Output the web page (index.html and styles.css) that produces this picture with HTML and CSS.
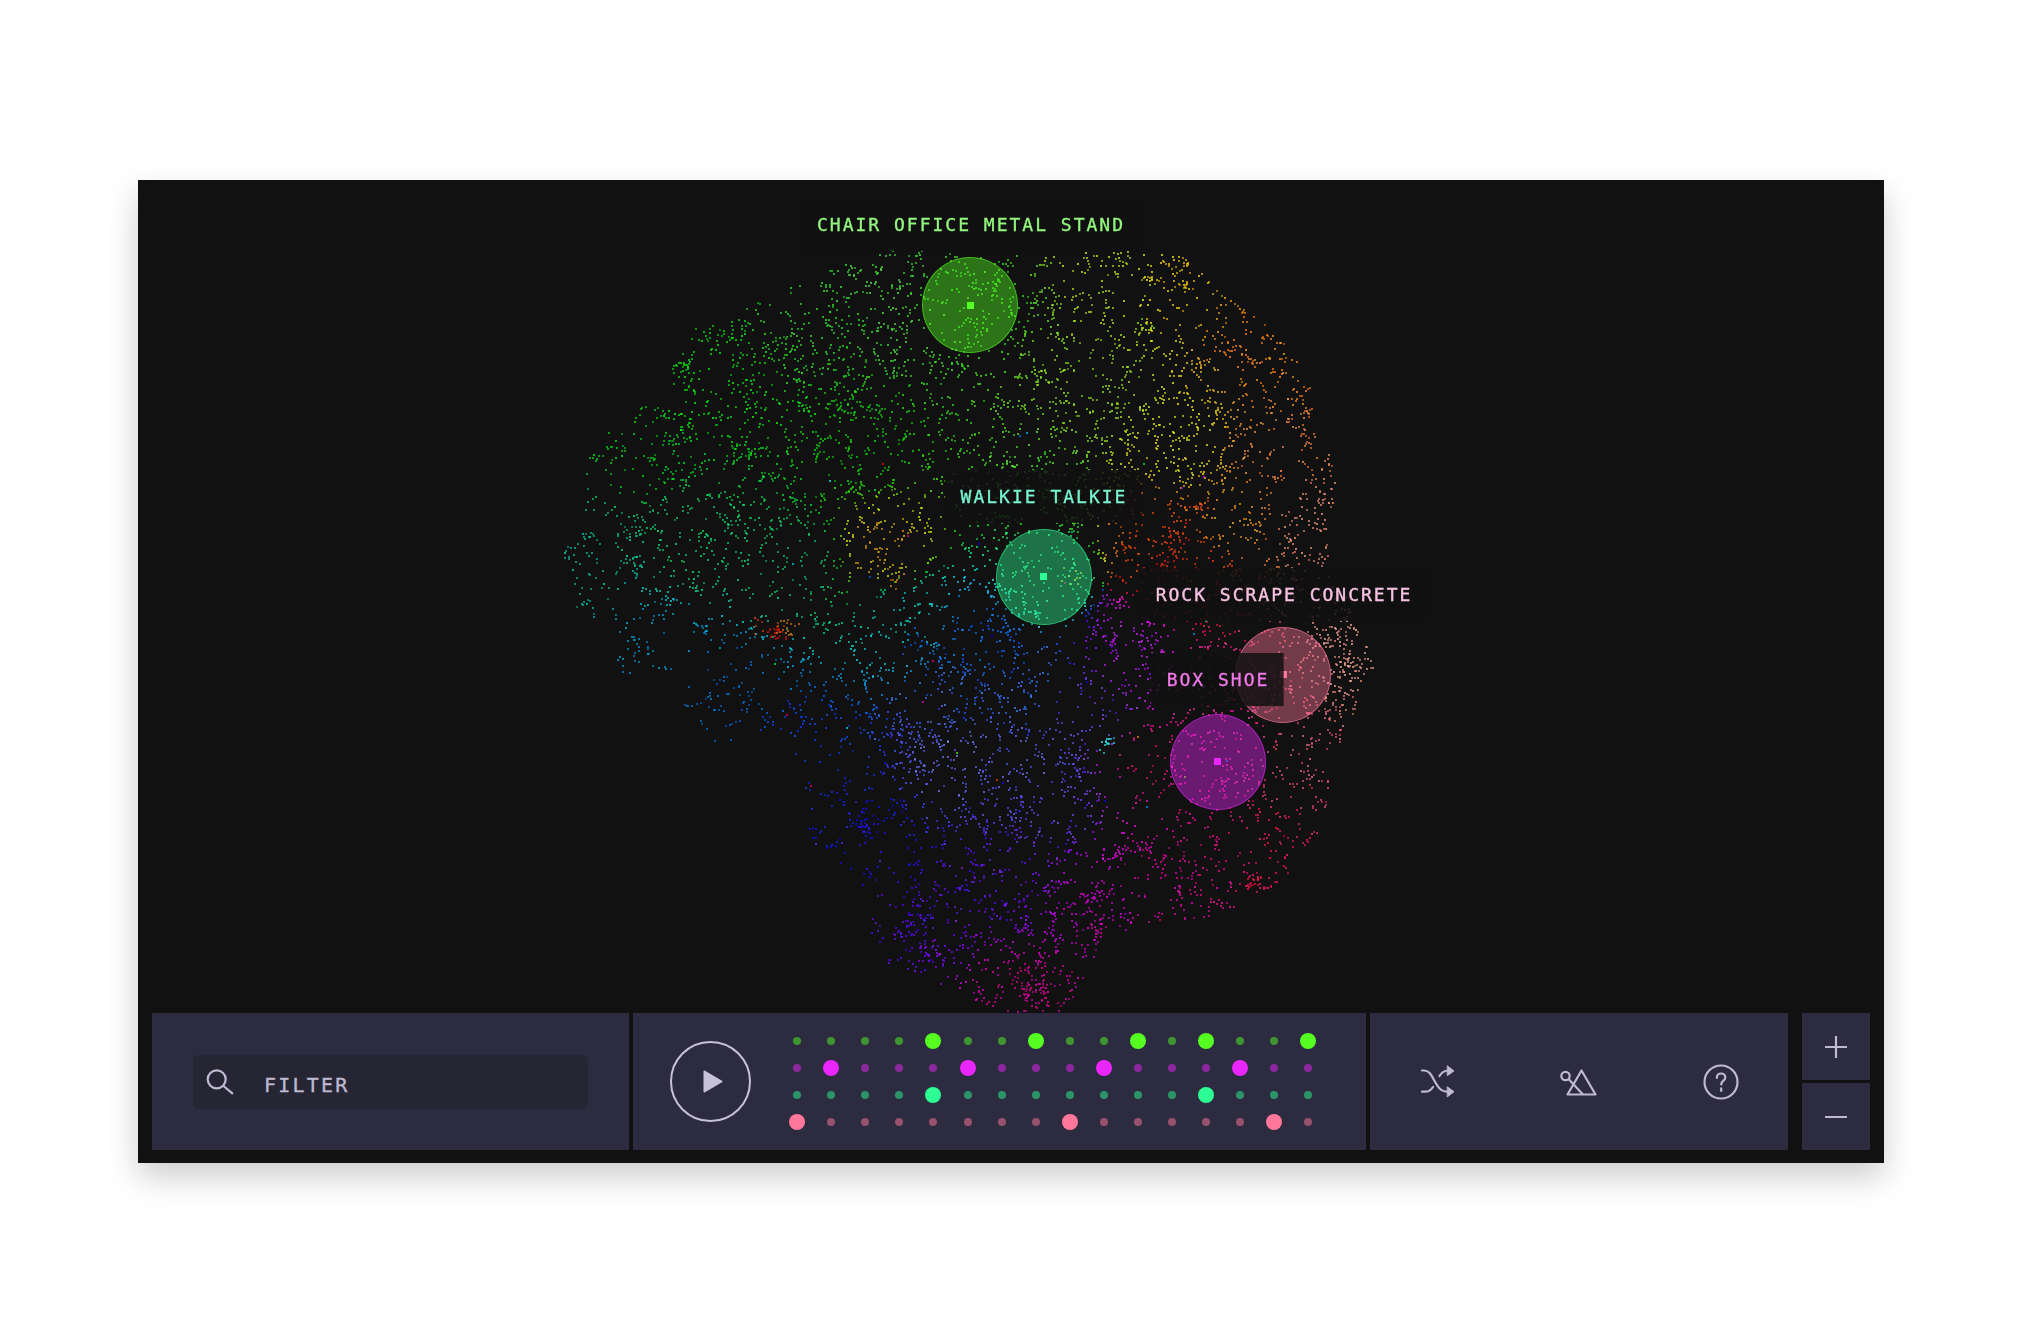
FILE: index.html
```html
<!DOCTYPE html>
<html lang="en">
<head>
<meta charset="utf-8">
<title>Sound map</title>
<link rel="stylesheet" href="styles.css">
</head>
<body>
<main class="window">
  <section class="stage">
    <canvas class="scatter" id="scatter" width="1746" height="833"></canvas>

    <div class="pin pin-chair"><i class="pin-core"></i></div>
    <div class="pin pin-walkie"><i class="pin-core"></i></div>
    <div class="pin pin-rock"><i class="pin-core"></i></div>
    <div class="pin pin-box"><i class="pin-core"></i></div>

    <div class="tag tag-chair">CHAIR OFFICE METAL STAND</div>
    <div class="tag tag-walkie">WALKIE TALKIE</div>
    <div class="tag tag-rock">ROCK SCRAPE CONCRETE</div>
    <div class="tag tag-box">BOX SHOE</div>
  </section>

  <footer class="bar">
    <div class="panel panel-filter">
      <div class="filter">
        <svg class="filter-icon" viewBox="0 0 28 28" width="28" height="28"><circle cx="10.7" cy="11.3" r="9"/><path d="M17.5 18l8.8 7.4"/></svg>
        <span class="filter-text">FILTER</span>
      </div>
    </div>

    <div class="panel panel-seq">
      <button class="play" type="button" aria-label="Play">
        <svg viewBox="0 0 20 23" width="20" height="23"><path d="M1.5 1.5L18.5 11.5L1.5 21.5Z"/></svg>
      </button>
      <div class="grid">
        <i class="dot g"></i><i class="dot g"></i><i class="dot g"></i><i class="dot g"></i><i class="dot g on"></i><i class="dot g"></i><i class="dot g"></i><i class="dot g on"></i><i class="dot g"></i><i class="dot g"></i><i class="dot g on"></i><i class="dot g"></i><i class="dot g on"></i><i class="dot g"></i><i class="dot g"></i><i class="dot g on"></i>
        <i class="dot m"></i><i class="dot m on"></i><i class="dot m"></i><i class="dot m"></i><i class="dot m"></i><i class="dot m on"></i><i class="dot m"></i><i class="dot m"></i><i class="dot m"></i><i class="dot m on"></i><i class="dot m"></i><i class="dot m"></i><i class="dot m"></i><i class="dot m on"></i><i class="dot m"></i><i class="dot m"></i>
        <i class="dot t"></i><i class="dot t"></i><i class="dot t"></i><i class="dot t"></i><i class="dot t on"></i><i class="dot t"></i><i class="dot t"></i><i class="dot t"></i><i class="dot t"></i><i class="dot t"></i><i class="dot t"></i><i class="dot t"></i><i class="dot t on"></i><i class="dot t"></i><i class="dot t"></i><i class="dot t"></i>
        <i class="dot p on"></i><i class="dot p"></i><i class="dot p"></i><i class="dot p"></i><i class="dot p"></i><i class="dot p"></i><i class="dot p"></i><i class="dot p"></i><i class="dot p on"></i><i class="dot p"></i><i class="dot p"></i><i class="dot p"></i><i class="dot p"></i><i class="dot p"></i><i class="dot p on"></i><i class="dot p"></i>
      </div>
    </div>

    <div class="panel panel-tools">
      <svg class="tool" viewBox="0 0 36 34" width="36" height="34" aria-label="Shuffle">
        <path d="M2 5.5h2c5 0 7 4 10 9.500s6 11.700 14 11.700"/>
        <path d="M2 26.700h3c3.500 0 6-1.500 8-4.700"/>
        <path d="M19.500 11c2-3.500 5-5.500 9-5.500"/>
        <path class="solid" d="M27.500 1l6.500 5-6.500 4.500z"/>
        <path class="solid" d="M27.500 22l6.500 4.700-6.500 5z"/>
      </svg>
      <svg class="tool" viewBox="0 0 40 34" width="40" height="34" aria-label="Shapes">
        <circle cx="5.500" cy="11" r="4.200"/>
        <path d="M9 14.500L22.500 29"/>
        <path d="M21.500 5.500L35.500 29.500H7.500Z"/>
      </svg>
      <svg class="tool" viewBox="0 0 36 36" width="36" height="36" aria-label="Help">
        <circle cx="18" cy="18" r="16.500"/>
        <path d="M13.800 14c0-2.800 1.900-4.500 4.300-4.500s4.200 1.600 4.200 3.900c0 3.200-4.100 3.400-4.100 7.100"/>
        <path d="M18.200 24.400v2.600"/>
      </svg>
    </div>

    <div class="zoom">
      <button class="zoom-btn" type="button" aria-label="Zoom in"><svg viewBox="0 0 22 22" width="22" height="22"><path d="M11 0.500v21M0.500 11h21"/></svg></button>
      <button class="zoom-btn" type="button" aria-label="Zoom out"><svg viewBox="0 0 22 22" width="22" height="22"><path d="M0.500 11h21"/></svg></button>
    </div>
  </footer>
</main>
<script src="scatter.js"></script>
</body>
</html>
```
FILE: styles.css
```css
* { box-sizing: border-box; }

html, body { margin: 0; background: #fff; }

body { padding: 180px 136px 181px 138px; }

.window {
  width: 1746px;
  height: 983px;
  display: flex;
  flex-direction: column;
  background: #111112;
  box-shadow: 0 14px 30px rgba(0, 0, 0, .2);
}

.stage {
  position: relative;
  flex: 1;
  overflow: hidden;
}

.scatter { display: block; }

.pin {
  position: absolute;
  width: 96px;
  height: 96px;
  margin: -48px 0 0 -48px;
  border-radius: 50%;
  border: 1.5px solid;
  display: flex;
  align-items: center;
  justify-content: center;
}

.pin-core { width: 7px; height: 7px; }

.pin-chair  { left: 832px;  top: 125px; background: rgba(85, 255, 34, .41);  border-color: rgba(85, 255, 34, .55); }
.pin-walkie { left: 905.5px; top: 396.5px; background: rgba(45, 253, 148, .41); border-color: rgba(45, 253, 148, .55); }
.pin-rock   { left: 1145px; top: 494.5px; background: rgba(255, 120, 156, .41); border-color: rgba(255, 120, 156, .6); }
.pin-box    { left: 1079.5px; top: 581.5px; background: rgba(233, 38, 251, .41); border-color: rgba(233, 38, 251, .55); }

.pin-chair .pin-core  { background: #55ff22; }
.pin-walkie .pin-core { background: #2dfd94; }
.pin-rock .pin-core   { background: #ff789c; }
.pin-box .pin-core    { background: #e926fb; }

.tag {
  position: absolute;
  transform: translateX(-50%);
  padding: 16px 14px 16px 16px;
  font: 18px/21px "DejaVu Sans Mono", "Liberation Mono", monospace;
  letter-spacing: 2px;
  white-space: nowrap;
  background: rgba(17, 17, 18, .84);
  -webkit-text-stroke: .35px currentColor;
}

.tag-chair  { left: 832px;  top: 18px;  color: #93f77f; }
.tag-walkie { left: 905px;  top: 290px; color: #78f2cf; }
.tag-rock   { left: 1145px; top: 388px; color: #f7c2e2; }
.tag-box    { left: 1079px; top: 473px; color: #f078e8; }

.bar {
  flex: none;
  height: 137px;
  margin: 0 14px 13px;
  display: flex;
}

.panel {
  background: #2d2b3f;
  display: flex;
  align-items: center;
}

.panel-filter { width: 477px; padding-left: 41px; }

.filter {
  width: 395px;
  height: 54px;
  padding-left: 13px;
  display: flex;
  align-items: center;
  gap: 30px;
  background: #262534;
  border-radius: 6px;
}

.filter-icon, .tool, .zoom-btn svg {
  fill: none;
  stroke: #bdbad1;
  stroke-width: 2.2;
  stroke-linecap: round;
  stroke-linejoin: round;
}

.filter-text {
  padding-top: 6px;
  font: 20px/24px "DejaVu Sans Mono", "Liberation Mono", monospace;
  letter-spacing: 2.2px;
  color: #bdbad1;
  -webkit-text-stroke: .35px currentColor;
}

.panel-seq { width: 733px; margin-left: 4px; padding-left: 37px; }

.play {
  flex: none;
  width: 81px;
  height: 81px;
  padding: 0 0 0 4px;
  display: flex;
  align-items: center;
  justify-content: center;
  background: none;
  border: 2.5px solid #c5c2d9;
  border-radius: 50%;
}

.play path { fill: #c5c2d9; stroke: #c5c2d9; stroke-width: 2; stroke-linejoin: round; }

.grid {
  margin-left: 29px;
  display: grid;
  grid-template-columns: repeat(16, 34.1px);
  grid-auto-rows: 27.33px;
  align-items: center;
  justify-items: center;
}

.dot {
  display: block;
  width: 8px;
  height: 8px;
  border-radius: 50%;
  opacity: .5;
}

.dot.on { width: 16px; height: 16px; opacity: 1; }
.dot.g { background: #55ff22; }
.dot.m { background: #e926fb; }
.dot.t { background: #2dfd94; }
.dot.p { background: #ff789c; }

.panel-tools {
  width: 418px;
  margin-left: 4px;
  padding: 0 49px 0 50px;
  justify-content: space-between;
}

.tool .solid { fill: #bdbad1; stroke-width: 1; }

.zoom {
  width: 68px;
  margin-left: 14px;
  display: flex;
  flex-direction: column;
  gap: 3px;
}

.zoom-btn {
  flex: 1;
  padding: 0;
  display: flex;
  align-items: center;
  justify-content: center;
  background: #2d2b3f;
  border: 0;
}
```
FILE: scatter.js
```js
(function () {
  var canvas = document.getElementById('scatter');
  var ctx = canvas.getContext('2d');
  var OX = 138, OY = 180;

  var seed = 20417;
  function rnd() {
    seed |= 0; seed = seed + 0x6D2B79F5 | 0;
    var t = Math.imul(seed ^ seed >>> 15, 1 | seed);
    t = t + Math.imul(t ^ t >>> 7, 61 | t) ^ t;
    return ((t ^ t >>> 14) >>> 0) / 4294967296;
  }
  function gauss() { return (rnd() + rnd() + rnd() + rnd() - 2) * 1.2; }

  var poly = [[563,550],[577,502],[590,450],[620,423],[647,400],[670,370],[683,333],[717,317],[747,307],[780,287],[813,278],[857,258],[903,247],[1000,255],[1133,250],[1183,257],[1203,273],[1240,303],[1277,330],[1290,350],[1310,360],[1313,413],[1310,423],[1337,463],[1337,517],[1337,563],[1360,620],[1375,663],[1370,683],[1357,703],[1360,713],[1333,753],[1327,813],[1312,843],[1283,883],[1250,900],[1207,920],[1163,920],[1100,943],[1083,990],[1057,1013],[1007,1013],[960,993],[923,978],[887,963],[867,927],[877,893],[840,873],[837,853],[817,847],[803,827],[807,807],[803,763],[770,740],[717,743],[683,710],[690,670],[620,677],[600,620],[577,610]];

  function inside(x, y) {
    var c = false;
    for (var i = 0, j = poly.length - 1; i < poly.length; j = i++) {
      var a = poly[i], b = poly[j];
      if ((a[1] > y) !== (b[1] > y) && x < (b[0] - a[0]) * (y - a[1]) / (b[1] - a[1]) + a[0]) c = !c;
    }
    return c;
  }

  // x, y, hue, saturation, lightness, density
  var anchors = [
    [640,450,125,95,42,.85],[720,400,122,95,45,.9],[820,330,118,75,52,.9],[900,300,115,70,55,.8],
    [600,560,168,90,38,.7],[680,540,150,85,45,.75],[650,640,195,95,42,.55],[720,690,208,95,42,.5],
    [800,760,225,95,48,.45],[870,830,240,90,50,.65],[905,930,262,95,50,.8],[1020,1000,315,95,42,1],
    [1100,900,298,95,42,.75],[1160,880,315,95,45,.8],[1210,860,325,90,48,.8],[1280,850,342,90,52,.7],
    [1300,770,345,75,62,.8],[1350,650,8,65,72,1],[1310,520,14,72,68,.95],[1270,460,25,85,58,.9],
    [1265,345,30,95,52,.9],[1180,270,47,95,50,.95],[1120,262,70,85,48,.75],[975,300,112,80,52,.8],
    [1090,390,85,80,50,1],[1180,450,62,90,52,1],[1230,510,38,90,52,.8],[1160,530,18,95,48,.9],
    [1180,575,8,90,45,.7],[1040,480,108,80,52,.8],[860,450,118,95,42,.8],[800,560,150,85,42,.6],
    [880,545,50,90,45,.6],[905,620,178,90,42,.85],[980,640,215,95,50,1],[1030,690,220,90,58,1],
    [950,760,238,85,68,1],[1050,800,250,90,62,.9],[1000,880,262,95,52,.9],[1130,650,285,90,52,.9],
    [1220,700,325,90,55,.7],[1090,720,255,85,60,.7],[1140,760,330,90,50,.5],
    [960,700,222,85,58,1],[1030,760,235,80,65,1],[1045,575,148,80,55,.85]
  ];

  function sample(x, y) {
    var sw = 0, cx = 0, cy = 0, s = 0, l = 0, d = 0;
    for (var i = 0; i < anchors.length; i++) {
      var a = anchors[i], dx = x - a[0], dy = y - a[1], q = dx * dx + dy * dy + 300;
      var w = 1 / (q * q), r = a[2] * Math.PI / 180;
      sw += w; cx += w * Math.cos(r); cy += w * Math.sin(r); s += w * a[3]; l += w * a[4]; d += w * a[5];
    }
    var h = Math.atan2(cy, cx) * 180 / Math.PI;
    return { h: h, s: s / sw, l: l / sw, d: d / sw };
  }

  function plot(x, y, h, s, l, alpha) {
    ctx.fillStyle = 'hsla(' + h.toFixed(0) + ',' + s.toFixed(0) + '%,' + l.toFixed(0) + '%,' + alpha + ')';
    ctx.beginPath();
    ctx.arc(Math.round(x) - OX, Math.round(y) - OY, 1.05, 0, Math.PI * 2);
    ctx.fill();
  }

  function dotAt(x, y, hOverride) {
    if (!inside(x, y)) return;
    var c = sample(x, y);
    var h = hOverride === undefined ? c.h + gauss() * 6 : hOverride + gauss() * 5;
    plot(x, y, h, c.s, c.l + gauss() * 5, (.75 + rnd() * .25).toFixed(2));
  }

  function blotch(x, y) {
    var f = .5 + .5 * Math.sin(x / 23 + 2 * Math.sin(y / 31)) * Math.sin(y / 19 + 2 * Math.sin(x / 37));
    return .5 + .5 * f;
  }

  // filaments: short wandering chains of dots
  var made = 0, guard = 0;
  while (made < 7200 && guard++ < 400000) {
    var x = 560 + rnd() * 820, y = 245 + rnd() * 770;
    if (!inside(x, y)) continue;
    var k = sample(x, y).d * blotch(x, y);
    if (rnd() > k) continue;
    var n = rnd() < .6 ? 1 : 1 + Math.floor(rnd() * rnd() * 6);
    var dir = rnd() * Math.PI * 2;
    for (var i = 0; i < n; i++) {
      dotAt(x, y);
      made++;
      dir += gauss() * .8;
      var step = 2.5 + rnd() * 3;
      x += Math.cos(dir) * step;
      y += Math.sin(dir) * step;
    }
  }

  // small dense blobs scattered across the cloud
  for (var b = 0; b < 24; b++) {
    var bx = 560 + rnd() * 820, by = 245 + rnd() * 770;
    if (!inside(bx, by)) continue;
    var count = 6 + Math.floor(rnd() * 10), sig = 8 + rnd() * 7;
    for (var p = 0; p < count; p++) dotAt(bx + gauss() * sig, by + gauss() * sig);
  }

  // named hot spots: x, y, spread, count, hue
  var spots = [
    [777,633,6,24,2],[787,628,7,18,32],[759,625,5,6,18],[880,547,16,28,42],[896,580,9,8,35],
    [1200,507,7,18,18],[1177,540,11,24,15],[1170,563,9,18,6],[1253,883,5,22,345],[1087,900,8,18,300],
    [1097,930,8,18,310],[1040,993,24,44,322],[917,917,14,26,258],[937,953,12,22,272],[867,830,10,20,244],
    [923,643,14,18,215],[907,743,16,28,240],[900,767,13,20,238],[1110,743,7,14,182],[1350,660,13,50,8],
    [1345,700,12,28,8],[1323,495,11,16,18],[840,397,15,24,118],[753,400,14,20,120],[687,383,10,14,122],
    [1143,330,8,12,82],[1230,345,10,14,30],[1175,262,13,18,50],[1073,575,8,10,65]
  ];
  spots.forEach(function (s) {
    for (var i = 0; i < s[3]; i++) {
      dotAt(s[0] + gauss() * s[2], s[1] + gauss() * s[2], s[4]);
    }
  });

  // stray outliers in unrelated hues
  for (var o = 0; o < 40; o++) {
    var ox = 750 + rnd() * 480, oy = 430 + rnd() * 380;
    if (inside(ox, oy)) plot(ox, oy, rnd() * 360, 100, 48, .9);
  }
})();
```
